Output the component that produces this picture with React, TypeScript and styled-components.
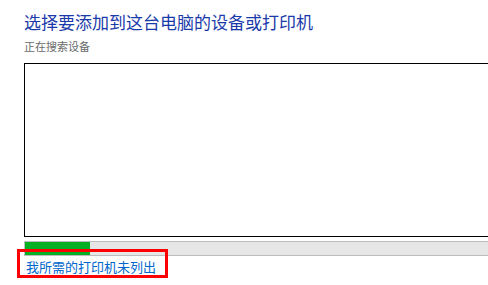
import styled, { createGlobalStyle } from "styled-components";

const GlobalStyle = createGlobalStyle`
  html, body {
    margin: 0;
    padding: 0;
    background: #ffffff;
    overflow: hidden;
  }
  body {
    font-family: "Noto Sans CJK SC", "Noto Sans", sans-serif;
  }
`;

const progress = 0.136;

export default function App() {
  return (
    <>
      <GlobalStyle />
      <Page>
        <Title>选择要添加到这台电脑的设备或打印机</Title>
        <Status>正在搜索设备</Status>
        <DeviceList />
        <ProgressTrack>
          <ProgressFill style={{ width: `${progress * 100}%` }} />
        </ProgressTrack>
        <LinkRow>
          <MissingLink href="#">我所需的打印机未列出</MissingLink>
          <Highlight />
        </LinkRow>
      </Page>
    </>
  );
}

const Page = styled.div`
  width: 488px;
  height: 285px;
  padding: 10px 0 0 24px;
  box-sizing: border-box;
  display: flex;
  flex-direction: column;
  overflow: hidden;
`;

const Title = styled.h1`
  margin: 0;
  font-size: 17px;
  line-height: 24px;
  font-weight: 400;
  color: #1a3aaa;
  white-space: nowrap;
`;

const Status = styled.div`
  margin-top: 4px;
  font-size: 11px;
  line-height: 16px;
  color: #6a6a6a;
`;

const DeviceList = styled.div`
  margin-top: 9px;
  width: 480px;
  height: 174px;
  box-sizing: border-box;
  border: 1px solid #000000;
  background: #ffffff;
  flex-shrink: 0;
`;

const ProgressTrack = styled.div`
  margin-top: 4px;
  width: 480px;
  height: 15px;
  box-sizing: border-box;
  border: 1px solid #bcbcbc;
  background: #e6e6e6;
  flex-shrink: 0;
`;

const ProgressFill = styled.div`
  height: 100%;
  background: #06b025;
`;

const LinkRow = styled.div`
  position: relative;
  margin-top: 2px;
  padding-left: 2px;
  height: 18px;
  display: flex;
  align-items: center;
  font-size: 13px;
  line-height: 18px;
`;

const MissingLink = styled.a`
  font-size: 13px;
  line-height: 18px;
  color: #0066cc;
  text-decoration: none;
  white-space: nowrap;
`;

const Highlight = styled.div`
  position: absolute;
  left: -7px;
  top: -9px;
  width: 151px;
  height: 29px;
  box-sizing: border-box;
  border: 3px solid #ff0000;
  pointer-events: none;
`;
